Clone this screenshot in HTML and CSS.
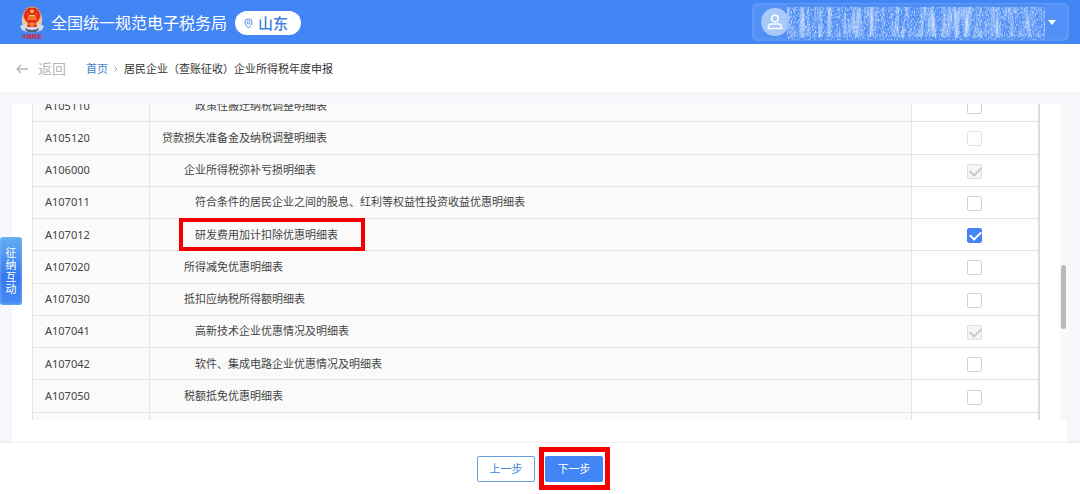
FILE: index.html
```html
<!DOCTYPE html>
<html lang="zh-CN">
<head>
<meta charset="utf-8">
<title>全国统一规范电子税务局</title>
<link rel="stylesheet" href="styles.css">
</head>
<body>
<header class="topbar">
  <svg class="emblem" viewBox="0 0 24 34" aria-hidden="true">
    <path d="M3 9Q0 17 4 21Q8 25 12 25Q16 25 20 21Q24 17 21 9Q19 19 12 20Q5 19 3 9Z" fill="#e3c9a0"/>
    <path d="M0 21L4 19Q12 26 20 19L24 21L22 25Q12 30 2 25Z" fill="#d9dbe6"/>
    <path d="M5 23Q12 27 19 23L18 26Q12 29 6 26Z" fill="#51618e"/>
    <circle cx="12" cy="10.500" r="8.500" fill="#e8281c" stroke="#efa24d"/>
    <path d="M12 3.500l.8 1.700 1.900.2-1.400 1.300.4 1.900-1.700-1-1.700 1 .4-1.900-1.400-1.300 1.900-.2z" fill="#ffd54a"/>
    <path d="M7 9h1M16 9h1M8 12h8M7 14h10M9 10.500h6" stroke="#ffc53e" stroke-width="1.200"/>
    <path d="M8 18h8l1 4H7z" fill="#e33a20"/>
    <path d="M9 19h6M12 17v5" stroke="#ffc53e"/>
    <text x="12" y="33" text-anchor="middle" class="emblem-text">中国税务</text>
  </svg>
  <h1 class="site-name">全国统一规范电子税务局</h1>
  <button class="region" type="button">
    <svg class="pin" viewBox="0 0 10 12" fill="none" stroke="#4285e8" aria-hidden="true"><path d="M5 11Q1 7.500 1 4.800a4 4 0 0 1 8 0Q9 7.500 5 11Z"/><circle cx="5" cy="4.800" r="1.700"/></svg>
    山东
  </button>
  <button class="account" type="button" aria-label="账户">
    <span class="avatar">
      <svg viewBox="0 0 16 16" fill="none" stroke="#fff" stroke-width="1.500" aria-hidden="true"><circle cx="8" cy="4.500" r="3.300"/><path d="M1.500 14.500v-1.500q0-3 3-3h7q3 0 3 3v1.500z"/></svg>
    </span>
    <svg class="masked" aria-hidden="true">
      <filter id="streaks" x="0" y="0" width="100%" height="100%">
        <feTurbulence type="fractalNoise" baseFrequency="0.22 0.03" numOctaves="3" seed="4"/>
        <feColorMatrix values="0 0 0 0 .78  0 0 0 0 .87  0 0 0 0 1  1.800 0 0 0 -.72"/>
      </filter>
      <filter id="grain" x="0" y="0" width="100%" height="100%">
        <feTurbulence type="fractalNoise" baseFrequency="0.7 0.4" numOctaves="2" seed="9"/>
        <feColorMatrix values="0 0 0 0 .8  0 0 0 0 .88  0 0 0 0 1  2 0 0 0 -.9"/>
      </filter>
      <rect width="100%" height="80%" y="10%" filter="url(#streaks)"/>
      <rect width="100%" height="90%" y="10%" filter="url(#grain)"/>
    </svg>
    <svg class="caret" viewBox="0 0 8 5" aria-hidden="true"><path d="M0 0h8L4 5z" fill="#fff"/></svg>
  </button>
</header>

<nav class="crumbs" aria-label="面包屑">
  <a class="back" href="#"><svg viewBox="0 0 12 10" fill="none" stroke="#b4b4b4" stroke-width="1.300" aria-hidden="true"><path d="M12 5H1M5 1L1 5l4 4"/></svg>返回</a>
  <a class="home" href="#">首页</a>
  <svg class="sep" viewBox="0 0 4 6" fill="none" stroke="#aaa" aria-hidden="true"><path d="M.5.500L3 3 .5 5.500"/></svg>
  <span>居民企业（查账征收）企业所得税年度申报</span>
</nav>

<main class="page">
  <div class="card">
    <div class="viewport">
      <table class="forms">
        <colgroup><col class="col-code"><col><col class="col-pick"></colgroup>
        <tbody>
          <tr><td>A105110</td><td class="level-3"><label for="f1">政策性搬迁纳税调整明细表</label></td><td><input type="checkbox" id="f1"></td></tr>
          <tr><td>A105120</td><td class="level-1"><label for="f2">贷款损失准备金及纳税调整明细表</label></td><td><input type="checkbox" id="f2" disabled></td></tr>
          <tr><td>A106000</td><td class="level-2"><label for="f3">企业所得税弥补亏损明细表</label></td><td><input type="checkbox" id="f3" checked disabled></td></tr>
          <tr><td>A107011</td><td class="level-3"><label for="f4">符合条件的居民企业之间的股息、红利等权益性投资收益优惠明细表</label></td><td><input type="checkbox" id="f4"></td></tr>
          <tr><td>A107012</td><td class="level-3"><label class="marked" for="f5">研发费用加计扣除优惠明细表</label></td><td><input type="checkbox" id="f5" checked></td></tr>
          <tr><td>A107020</td><td class="level-2"><label for="f6">所得减免优惠明细表</label></td><td><input type="checkbox" id="f6"></td></tr>
          <tr><td>A107030</td><td class="level-2"><label for="f7">抵扣应纳税所得额明细表</label></td><td><input type="checkbox" id="f7"></td></tr>
          <tr><td>A107041</td><td class="level-3"><label for="f8">高新技术企业优惠情况及明细表</label></td><td><input type="checkbox" id="f8" checked disabled></td></tr>
          <tr><td>A107042</td><td class="level-3"><label for="f9">软件、集成电路企业优惠情况及明细表</label></td><td><input type="checkbox" id="f9"></td></tr>
          <tr><td>A107050</td><td class="level-2"><label for="f10">税额抵免优惠明细表</label></td><td><input type="checkbox" id="f10"></td></tr>
          <tr><td></td><td></td><td></td></tr>
        </tbody>
      </table>
    </div>
    <div class="track"><div class="thumb"></div></div>
  </div>
</main>

<footer class="actions">
  <button class="btn" type="button">上一步</button>
  <button class="btn primary" type="button">下一步</button>
</footer>

<button class="side-tab" type="button">征纳互动</button>
</body>
</html>
```
FILE: styles.css
```css
* { box-sizing: border-box; }

body {
  display: flex;
  flex-direction: column;
  height: 100vh;
  margin: 0;
  overflow: hidden;
  background: #f5f7fa;
  color: #444;
  font: 11px/16px "Noto Sans", "Noto Sans CJK SC", sans-serif;
}

button { font: inherit; border: 0; padding: 0; cursor: pointer; }
a { text-decoration: none; }

.topbar {
  display: flex;
  align-items: center;
  flex: none;
  height: 44px;
  padding: 0 11px 0 20px;
  background: #4285f4;
}
.emblem { width: 24px; height: 34px; margin-right: 7px; }
.emblem-text { font-size: 5px; font-weight: 700; fill: #d8232a; }
.site-name {
  margin: 2px 8px 0 0;
  color: #fff;
  font-size: 16px;
  line-height: 24px;
  font-weight: 400;
}
.region {
  display: flex;
  align-items: center;
  gap: 5px;
  height: 24px;
  margin-top: 2px;
  padding: 0 13px 0 9px;
  border-radius: 12px;
  background: #fff;
  color: #3f80dc;
  font-size: 15px;
  font-weight: 500;
}
.pin { width: 9px; height: 11px; }
.account {
  display: flex;
  align-items: center;
  width: 317px;
  height: 38px;
  margin-left: auto;
  padding: 0 13px 0 9px;
  border-radius: 6px;
  background: #5290f6;
  box-shadow: inset 0 0 5px #71a5f9;
}
.avatar {
  display: grid;
  place-items: center;
  flex: none;
  width: 28px;
  height: 28px;
  border-radius: 50%;
  background: #a9caf8;
}
.avatar svg { width: 16px; height: 16px; }
.masked { flex: 1; min-width: 0; height: 36px; margin: 0 3px 0 -2px; background: #4f8ef5; }
.caret { width: 8px; height: 5px; }

.crumbs {
  display: flex;
  align-items: center;
  flex: none;
  height: 48px;
  padding: 2px 16px 0;
  background: #fff;
  color: #333;
}
.back {
  display: flex;
  align-items: center;
  gap: 10px;
  margin-right: 20px;
  color: #b8b8b8;
  font-size: 14px;
}
.back svg { width: 12px; height: 10px; }
.home { color: #3f80c8; }
.sep { width: 4px; height: 6px; margin: 0 6px; }

.page { flex: 1; min-height: 0; padding: 12px 13px 0 12px; }
.card { display: flex; height: 100%; padding-bottom: 23px; background: #fff; }
.viewport { flex: 1; overflow: hidden; padding: 0 20px; }
.track { flex: none; width: 7px; padding: 161px 1px 0; background: #f8f9fb; }
.thumb { height: 64px; border-radius: 3px; background: #b9babc; }

.forms {
  width: 100%;
  height: 356px;
  margin-top: -15px;
  border-collapse: collapse;
  table-layout: fixed;
}
.col-code { width: 117px; }
.col-pick { width: 128px; }
.forms td {
  height: 32px;
  padding: 0 12px;
  border: 1px solid #e3e3e3;
  background: #fafafa;
}
.forms td:last-child { padding: 0; background: #fff; text-align: center; border-right: 2px solid #dcdcdc; }
.forms .level-1 { padding-left: 12px; }
.forms .level-2 { padding-left: 34px; }
.forms .level-3 { padding-left: 45px; }

.marked { position: relative; }
.marked::after {
  content: "";
  position: absolute;
  inset: -9px -27px -9px -16px;
  border: 4px solid #f40000;
}

input[type="checkbox"] {
  appearance: none;
  display: block;
  width: 15px;
  height: 15px;
  margin: 2px auto 0;
  border: 1px solid #d2d2d2;
  border-radius: 2px;
  background: #fff;
}
input:disabled { border-color: #e3e3e3; }
input:checked { border-color: #4285f4; background: #4285f4; }
input:checked:disabled { border-color: #dedede; background: #f5f5f5; }
input:checked::after {
  content: "";
  display: block;
  width: 9px;
  height: 5px;
  margin: 3px 2px;
  border: solid #fff;
  border-width: 0 0 2px 2px;
  transform: translateY(-1px) rotate(-45deg);
}
input:checked:disabled::after { border-color: #c8c8c8; }

.actions {
  display: flex;
  align-items: center;
  justify-content: center;
  gap: 10px;
  flex: none;
  height: 51px;
  padding-top: 1px;
  background: #fff;
  box-shadow: 0 0 3px #e2e3e6;
  z-index: 1;
}
.btn {
  width: 58px;
  height: 26px;
  border: 1px solid #6b9ee0;
  border-radius: 2px;
  background: #fff;
  color: #4285d8;
}
.primary { position: relative; border-color: #4285f4; background: #4285f4; color: #fff; }
.primary::after {
  content: "";
  position: absolute;
  inset: -10px -8px -9px -7px;
  border: 5px solid #f40000;
}

.side-tab {
  position: absolute;
  left: 0;
  top: 237px;
  width: 22px;
  padding: 10px 5px;
  border-radius: 3px;
  background: linear-gradient(#64acf2, #3478f0 60%, #4a8cf6);
  box-shadow: inset 0 0 3px #8cc2f8;
  color: #fff;
  font-size: 11px;
  line-height: 12px;
}
```
